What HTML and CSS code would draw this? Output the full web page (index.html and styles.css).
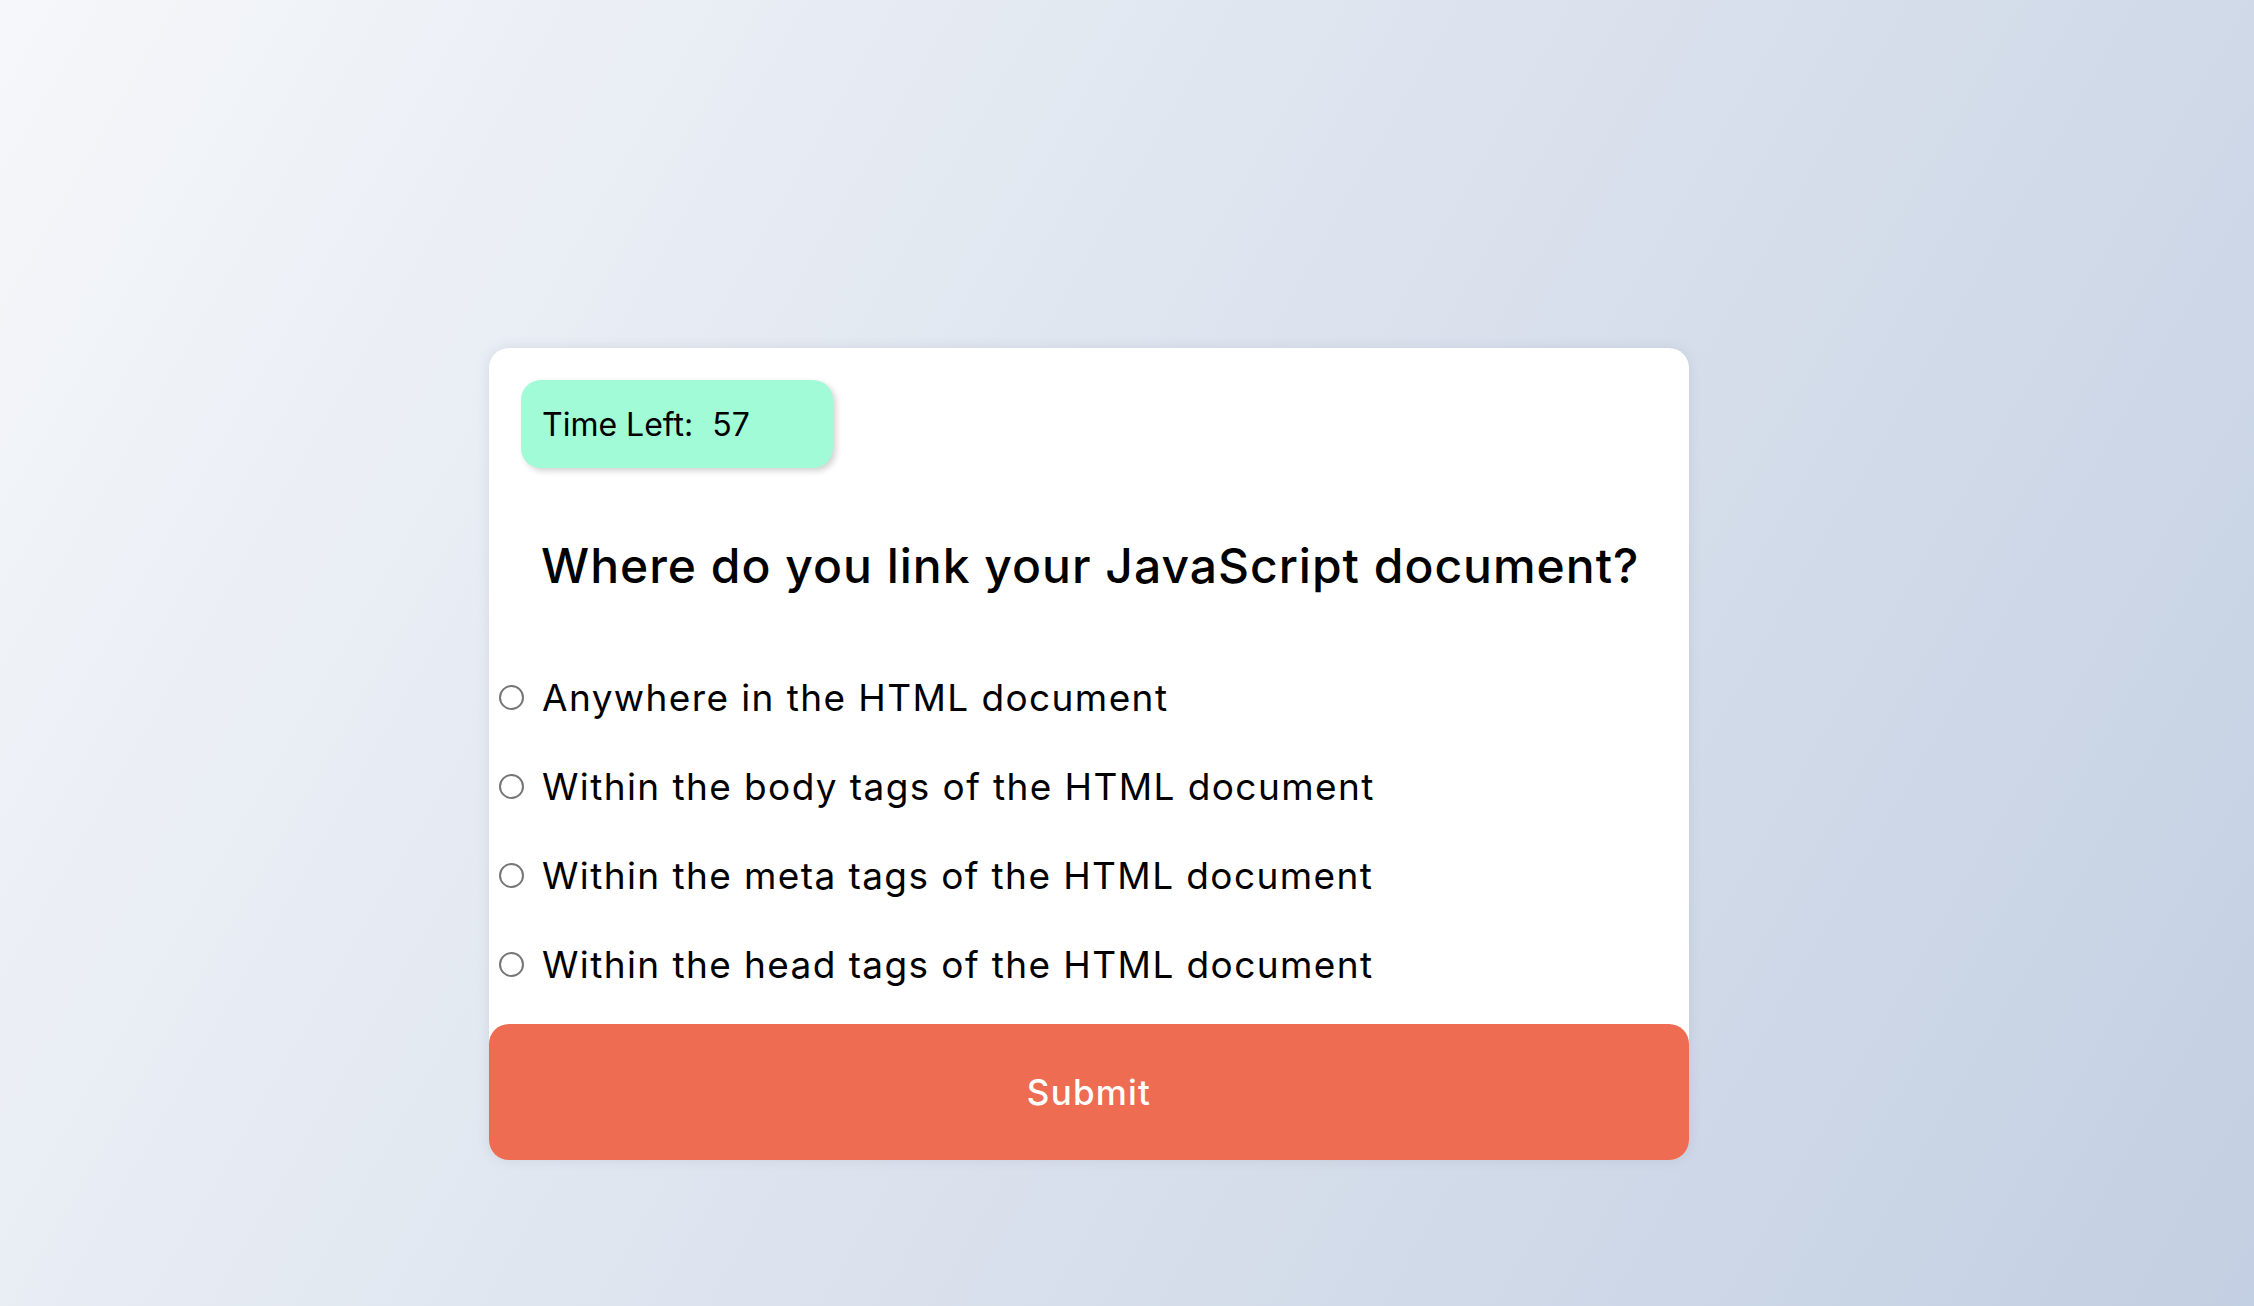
FILE: index.html
```html
<!DOCTYPE html>
<html lang="en">
<head>
<meta charset="utf-8">
<title>Quiz</title>
<link rel="stylesheet" href="styles.css">
</head>
<body>
<main class="page">
  <section class="card">
    <div class="timer"><span class="timer-label">Time Left:</span><span class="timer-value">57</span></div>
    <h2 class="question">Where do you link your JavaScript document?</h2>
    <ul class="options">
      <li class="option"><span class="radio"></span><span class="option-text">Anywhere in the HTML document</span></li>
      <li class="option"><span class="radio"></span><span class="option-text">Within the body tags of the HTML document</span></li>
      <li class="option"><span class="radio"></span><span class="option-text">Within the meta tags of the HTML document</span></li>
      <li class="option"><span class="radio"></span><span class="option-text">Within the head tags of the HTML document</span></li>
    </ul>
    <button class="submit">Submit</button>
  </section>
</main>
</body>
</html>
```

FILE: styles.css
```css
* { box-sizing: border-box; }
html, body { margin: 0; padding: 0; }
body {
  width: 2254px;
  height: 1306px;
  overflow: hidden;
  background: linear-gradient(120deg, #f5f7fa 0%, #c3cfe2 100%);
  font-family: "Inter", "Noto Sans", sans-serif;
  color: #000;
}
.page {
  padding: 348px 0 0 489px;
}
.card {
  width: 1200px;
  height: 812px;
  background: #fff;
  border-radius: 20px;
  box-shadow: 0 0 12px rgba(120, 130, 150, 0.18);
  display: flex;
  flex-direction: column;
}
.timer {
  margin: 32px 0 0 32px;
  width: 312px;
  height: 88px;
  background: #a1fbd7;
  border-radius: 20px;
  box-shadow: 3px 3px 6px rgba(0, 0, 0, 0.18);
  display: flex;
  align-items: center;
  padding-left: 21px;
  font-size: 32px;
  font-weight: 400;
}
.timer-value { margin-left: 19px; }
.question {
  margin: 0;
  padding: 68px 0 0 52px;
  height: 185px;
  font-size: 48px;
  font-weight: 500;
  line-height: 60px;
  letter-spacing: 1px;
}
.options {
  list-style: none;
  margin: 0;
  padding: 0;
}
.option {
  height: 89px;
  display: flex;
  align-items: center;
  padding-left: 10px;
  font-size: 37px;
  letter-spacing: 1.4px;
}
.radio {
  width: 25px;
  height: 25px;
  border: 2px solid #767676;
  border-radius: 50%;
  background: #fff;
  margin-right: 18px;
  flex: none;
}
.submit {
  margin-top: auto;
  height: 136px;
  width: 100%;
  border: none;
  border-radius: 20px;
  background: #ed6c52;
  color: #fff;
  font-family: "Inter", "Noto Sans", sans-serif;
  font-size: 35px;
  font-weight: 500;
  letter-spacing: 1.2px;
  padding: 0;
}
```
